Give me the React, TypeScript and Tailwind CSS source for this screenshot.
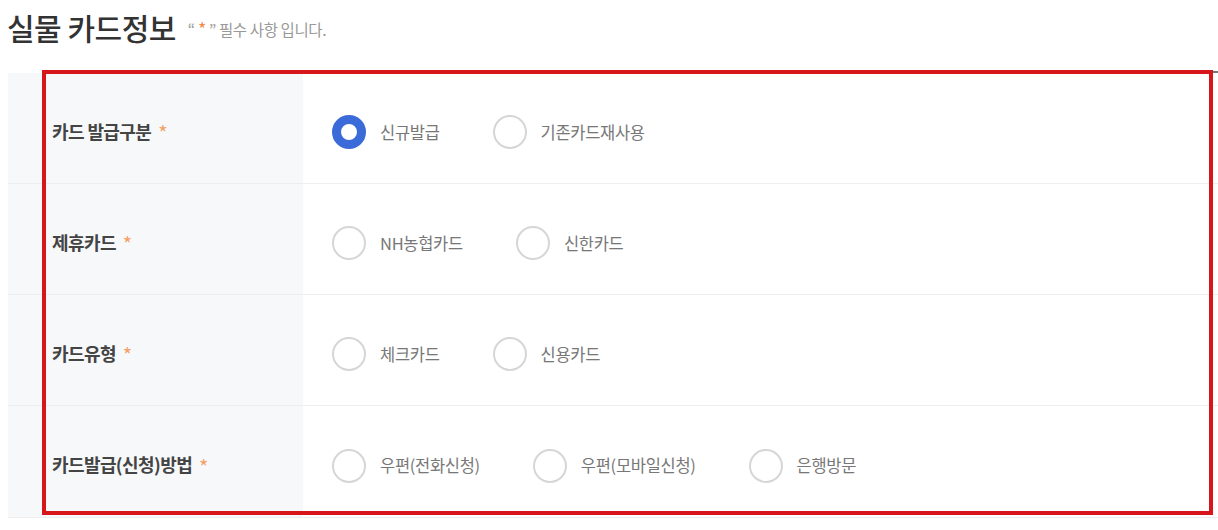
import * as React from 'react';

type Row = {
  label: string;
  options: string[];
  selected?: number;
};

const rows: Row[] = [
  {label: '카드 발급구분', options: ['신규발급', '기존카드재사용'], selected: 0},
  {label: '제휴카드', options: ['NH농협카드', '신한카드']},
  {label: '카드유형', options: ['체크카드', '신용카드']},
  {label: '카드발급(신청)방법', options: ['우편(전화신청)', '우편(모바일신청)', '은행방문']},
];

const Radio = ({checked, label}: {checked: boolean; label: string}) => (
  <label className="flex items-center mr-[53px] cursor-pointer">
    {checked ? (
      <span className="w-[34px] h-[34px] rounded-full border-[9px] border-[#3b6bd8] bg-white" />
    ) : (
      <span className="w-[34px] h-[34px] rounded-full border-2 border-[#d6d6d6] bg-white" />
    )}
    <span className="ml-[14px] text-[16.5px] text-[#777] tracking-[-0.3px]">{label}</span>
  </label>
);

export default function App() {
  return (
    <div
      className="w-[1218px] h-[530px] bg-white relative overflow-hidden"
      style={{fontFamily: '"Noto Sans CJK KR", "Noto Sans", sans-serif'}}>
      <div className="flex items-end pl-[7px] pt-[4px] h-[42px]">
        <h1 className="text-[30px] font-medium leading-none text-[#333] tracking-[-0.5px]">
          실물 카드정보
        </h1>
        <p className="ml-[12px] text-[15.5px] text-[#999] leading-none mb-[5px] tracking-[-0.4px]">
          “ <span className="text-[#f08a4b] text-[18px]">*</span> ” 필수 사항 입니다.
        </p>
      </div>

      <div className="mt-[29px] ml-[42px] h-[2px] bg-[#777]" />

      <div className="ml-[8px]">
        {rows.map((row, i) => (
          <div
            key={row.label}
            className={`flex h-[111px] ${i < rows.length - 1 ? 'border-b border-[#eeeeee]' : ''}`}>
            <div className="w-[295px] bg-[#f7f8fa] flex items-center pl-[44px] pt-[6px]">
              <span className="text-[18px] font-bold text-[#444] tracking-[-0.6px]">{row.label}</span>
              <span className="ml-[7px] text-[20px] leading-none text-[#f3a066] mt-[4px]">*</span>
            </div>
            <div className="flex-1 flex items-center pl-[29px] pt-[8px]">
              {row.options.map((opt, j) => (
                <Radio key={opt} label={opt} checked={row.selected === j} />
              ))}
            </div>
          </div>
        ))}
        <div className="border-b border-[#eeeeee]" />
      </div>

      <div className="absolute left-[42px] top-[70px] w-[1171px] h-[445px] border-4 border-[#d7161c] pointer-events-none" />
    </div>
  );
}
